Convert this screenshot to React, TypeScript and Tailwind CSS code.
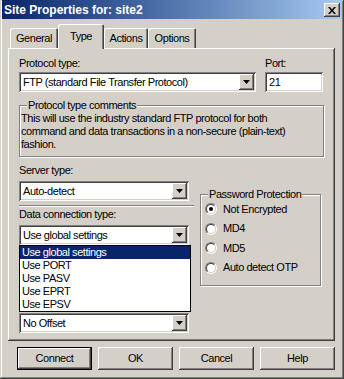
import React from 'react';

const raised =
  'shadow-[inset_-1px_-1px_0_#404040,inset_1px_1px_0_#ffffff,inset_-2px_-2px_0_#808080,inset_2px_2px_0_#d4d0c8]';
const sunken =
  'shadow-[inset_1px_1px_0_#808080,inset_-1px_-1px_0_#ffffff,inset_2px_2px_0_#404040,inset_-2px_-2px_0_#d4d0c8]';
const etched = 'border border-[#808080] shadow-[1px_1px_0_#ffffff,inset_1px_1px_0_#ffffff]';

function Arrow() {
  return (
    <div className={`${raised} bg-[#d4d0c8] w-[15px] h-[16px] flex items-center justify-center shrink-0`}>
      <svg width="7" height="4" viewBox="0 0 7 4">
        <path d="M0 0h7L3.5 4z" fill="#000000" />
      </svg>
    </div>
  );
}

function Combo({ value, className = '' }: { value: string; className?: string }) {
  return (
    <div className={`${sunken} bg-white h-[20px] flex items-center p-[2px] ${className}`}>
      <span className="flex-1 pl-[2px] pt-[1px] whitespace-nowrap overflow-hidden">{value}</span>
      <Arrow />
    </div>
  );
}

function Tab({ label, selected = false, className = '' }: { label: string; selected?: boolean; className?: string }) {
  if (selected) {
    return (
      <div
        className={`relative z-10 -mb-px h-[25px] bg-[#d4d0c8] rounded-t-[2px] pt-[6px] flex justify-center shadow-[inset_1px_1px_0_#ffffff,inset_-1px_0_0_#404040,inset_-2px_0_0_#808080] ${className}`}
      >
        {label}
      </div>
    );
  }
  return (
    <div
      className={`h-[20px] bg-[#d4d0c8] rounded-t-[2px] pt-[4px] flex justify-center shadow-[inset_1px_1px_0_#ffffff,inset_-1px_0_0_#404040,inset_-2px_0_0_#808080] ${className}`}
    >
      {label}
    </div>
  );
}

function Radio({ label, checked = false, className = '' }: { label: string; checked?: boolean; className?: string }) {
  return (
    <div className={`flex items-center pl-[4px] gap-[6px] ${className}`}>
      <div className="w-[12px] h-[12px] rounded-full border border-t-[#808080] border-l-[#808080] border-b-white border-r-white flex">
        <div className="w-[10px] h-[10px] rounded-full border border-t-[#404040] border-l-[#404040] border-b-[#d4d0c8] border-r-[#d4d0c8] bg-white flex items-center justify-center">
          {checked && <div className="w-[4px] h-[4px] rounded-full bg-black" />}
        </div>
      </div>
      <span>{label}</span>
    </div>
  );
}

function PushButton({ label, isDefault = false }: { label: string; isDefault?: boolean }) {
  const border = isDefault
    ? 'shadow-[inset_0_0_0_1px_#000000,inset_-2px_-2px_0_#404040,inset_2px_2px_0_#ffffff,inset_-3px_-3px_0_#808080]'
    : raised;
  return (
    <div className={`${border} bg-[#d4d0c8] w-[75px] h-[23px] flex items-center justify-center`}>{label}</div>
  );
}

const dataTypes = ['Use global settings', 'Use PORT', 'Use PASV', 'Use EPRT', 'Use EPSV'];

export default function App() {
  return (
    <div className="w-[344px] h-[379px] bg-[#d4d0c8] font-['Liberation_Sans',Arial,sans-serif] text-[11px] leading-[13px] tracking-[-0.45px] text-black overflow-hidden shadow-[inset_-1px_-1px_0_#404040,inset_1px_1px_0_#d4d0c8,inset_-2px_-2px_0_#808080,inset_2px_2px_0_#ffffff]">
      {/* Title bar */}
      <div className="mx-[2px] h-[19px] bg-gradient-to-r from-[#0a246a] to-[#a6caf0] flex items-start justify-between">
        <span className="pl-[2px] pt-[4px] text-white font-bold text-[12px] leading-[13px] tracking-normal">
          Site Properties for: site2
        </span>
        <div className={`${raised} bg-[#d4d0c8] mt-[3px] mr-[2px] w-[16px] h-[14px] flex items-center justify-center`}>
          <svg width="8" height="7" viewBox="0 0 8 7">
            <path d="M0 0h2l2 2.4L6 0h2L5 3.5 8 7H6L4 4.6 2 7H0l3-3.5z" fill="#000000" />
          </svg>
        </div>
      </div>

      {/* Tabs */}
      <div className="mt-[5px] h-[24px] pl-[10px] flex items-end">
        <Tab label="General" className="w-[48px]" />
        <Tab label="Type" selected className="w-[46px]" />
        <Tab label="Actions" className="w-[44px]" />
        <Tab label="Options" className="w-[48px]" />
      </div>

      {/* Tab panel */}
      <div className={`${raised} ml-[8px] w-[327px] h-[293px] pl-[11px] pt-[9px] flex flex-col`}>
        <div className="flex">
          <div className="w-[237px] flex flex-col">
            <span>Protocol type:</span>
            <Combo value="FTP (standard File Transfer Protocol)" className="mt-[2px]" />
          </div>
          <div className="ml-[9px] w-[58px] flex flex-col">
            <span>Port:</span>
            <div className={`${sunken} bg-white h-[20px] mt-[2px] pl-[4px] pt-[1px] flex items-center`}>21</div>
          </div>
        </div>

        <div className={`${etched} relative mt-[13px] w-[305px] pt-[6px] pb-[5px] pl-[1px]`}>
          <span className="absolute top-[-7px] left-[7px] px-[1px] bg-[#d4d0c8]">Protocol type comments</span>
          <p>
            This will use the industry standard FTP protocol for both
            <br />
            command and data transactions in a non-secure (plain-text)
            <br />
            fashion.
          </p>
        </div>

        <div className="flex mt-[7px]">
          <div className="w-[175px] flex flex-col">
            <span>Server type:</span>
            <Combo value="Auto-detect" className="mt-[4px] w-[170px]" />
            <div className="mt-[4px] h-[2px] border-t border-b border-t-[#808080] border-b-white" />
            <span className="mt-[1px]">Data connection type:</span>
            <div className="relative mt-[4px] w-[170px]">
              <Combo value="Use global settings" />
              <div className="absolute left-0 top-full w-[172px] border border-black bg-white z-20">
                {dataTypes.map((t, i) => (
                  <div
                    key={t}
                    className={`h-[13px] pl-[2px] whitespace-nowrap ${i === 0 ? 'bg-[#0a246a] text-white' : ''}`}
                  >
                    {t}
                  </div>
                ))}
              </div>
            </div>
            <div className="h-[68px]" />
            <Combo value="No Offset" className="w-[170px]" />
          </div>

          <div className={`${etched} relative ml-[6px] mt-[30px] w-[121px] h-[92px] pt-[4px] self-start`}>
            <span className="absolute top-[-7px] left-[7px] px-[1px] bg-[#d4d0c8]">Password Protection</span>
            <Radio label="Not Encrypted" checked className="h-[20px]" />
            <Radio label="MD4" className="h-[19px]" />
            <Radio label="MD5" className="h-[20px]" />
            <Radio label="Auto detect OTP" className="h-[19px]" />
          </div>
        </div>
      </div>

      {/* Buttons */}
      <div className="mt-[6px] ml-[17px] flex gap-[6px]">
        <PushButton label="Connect" isDefault />
        <PushButton label="OK" />
        <PushButton label="Cancel" />
        <PushButton label="Help" />
      </div>
    </div>
  );
}
